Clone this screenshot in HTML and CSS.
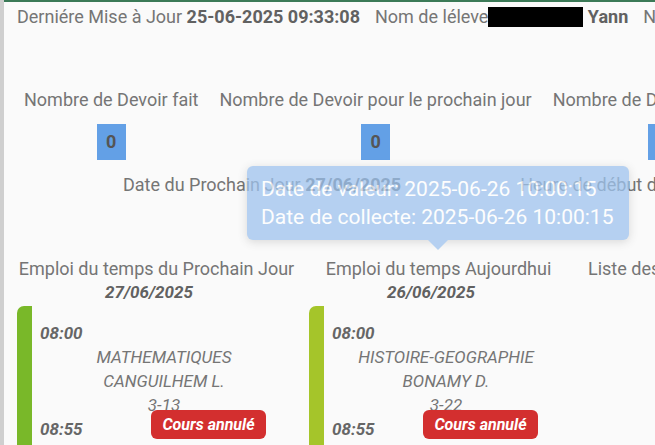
FILE: index.html
```html
<!DOCTYPE html>
<html lang="fr">
<head>
<meta charset="utf-8">
<title>Tableau de bord</title>
<link rel="stylesheet" href="styles.css">
</head>
<body>
<div class="frame">
  <div class="main">
    <div class="header">
      <span class="hitem">Derniére Mise à Jour <b>25-06-2025 09:33:08</b></span>
      <span class="hitem">Nom de léleve<span class="redact"></span> <b>Yann</b></span>
      <span class="hitem">Nom de la classe <b>3E</b></span>
    </div>

    <div class="stats">
      <div class="stat">
        <div class="stat-label">Nombre de Devoir fait</div>
        <div class="stat-value">0</div>
      </div>
      <div class="stat">
        <div class="stat-label">Nombre de Devoir pour le prochain jour</div>
        <div class="stat-value">0</div>
      </div>
      <div class="stat">
        <div class="stat-label">Nombre de Devoir en retard</div>
        <div class="stat-value">0</div>
      </div>
    </div>

    <div class="dayinfo">
      <span>Date du Prochain Jour <b>27/06/2025</b></span>
      <span>Heure de début du Prochain Jour <b>08:00</b></span>
    </div>

    <div class="columns">
      <div class="col col-next">
        <div class="col-title">Emploi du temps du Prochain Jour</div>
        <div class="col-date">27/06/2025</div>
        <div class="card">
          <div class="card-bar bar-green"></div>
          <div class="card-body">
            <div class="time">08:00</div>
            <div class="course">MATHEMATIQUES</div>
            <div class="course">CANGUILHEM L.</div>
            <div class="course">3-13</div>
            <div class="end-row">
              <span class="time">08:55</span>
              <span class="badge">Cours annulé</span>
            </div>
          </div>
        </div>
      </div>
      <div class="col col-today">
        <div class="col-title">Emploi du temps Aujourdhui</div>
        <div class="col-date">26/06/2025</div>
        <div class="card">
          <div class="card-bar bar-lime"></div>
          <div class="card-body">
            <div class="time">08:00</div>
            <div class="course">HISTOIRE-GEOGRAPHIE</div>
            <div class="course">BONAMY D.</div>
            <div class="course">3-22</div>
            <div class="end-row">
              <span class="time">08:55</span>
              <span class="badge">Cours annulé</span>
            </div>
          </div>
        </div>
      </div>
      <div class="col col-list">
        <div class="col-title">Liste des Devoirs</div>
      </div>
    </div>
  </div>
</div>

<div class="tooltip">
  <div>Date de valeur: 2025-06-26 10:00:15</div>
  <div>Date de collecte: 2025-06-26 10:00:15</div>
</div>
</body>
</html>
```

FILE: styles.css
```css
html, body {
  margin: 0;
  padding: 0;
  background: #fafafa;
  overflow: hidden;
  height: 100%;
}

body {
  font-family: Roboto, "Liberation Sans", sans-serif;
  font-size: 18px;
  color: #757575;
  white-space: nowrap;
}

b {
  font-weight: 700;
  color: #616161;
}

.frame {
  border-left: 4px solid #cfcfcf;
  min-height: 100%;
  box-sizing: border-box;
}

.main {
  border-top: 2px solid #3b7a57;
  padding-left: 13px;
  width: 1200px;
}

.header {
  padding-top: 3px;
  line-height: 24px;
  display: flex;
  gap: 15px;
}

.redact {
  display: inline-block;
  width: 95px;
  height: 20px;
  background: #000;
  vertical-align: -4px;
}

.stats {
  margin-top: 59px;
  padding-left: 7px;
  display: flex;
  gap: 21px;
}

.stat {
  display: flex;
  flex-direction: column;
  align-items: center;
}

.stat-label {
  line-height: 24px;
}

.stat-value {
  margin-top: 12px;
  background: #63a0e6;
  color: #555;
  font-weight: 700;
  width: 29px;
  height: 36px;
  line-height: 36px;
  text-align: center;
}

.dayinfo {
  margin-top: 13px;
  padding-left: 106px;
  line-height: 24px;
  display: flex;
  gap: 119px;
}

.columns {
  margin-top: 60px;
  display: flex;
}

.col-title {
  line-height: 24px;
  text-align: center;
}

.col-date {
  font-size: 17px;
  line-height: 22px;
  text-align: center;
  font-weight: 700;
  font-style: italic;
  color: #616161;
  padding-right: 15px;
}

.col-next {
  width: 279px;
}

.col-today {
  width: 259px;
  margin-left: 13px;
}

.col-list {
  margin-left: 20px;
}

.col-list .col-title {
  text-align: left;
}

.card {
  margin-top: 3px;
  display: flex;
  height: 200px;
}

.card-bar {
  width: 15px;
  flex: none;
  border-top-left-radius: 7px;
}

.bar-green {
  background: #79b829;
}

.bar-lime {
  background: #a5c52a;
}

.card-body {
  flex: 1;
  padding-top: 15px;
  font-style: italic;
  font-size: 17px;
}

.time {
  font-weight: 700;
  color: #666;
  line-height: 24px;
  padding-left: 8px;
}

.course {
  text-align: center;
  line-height: 24px;
}

.end-row {
  display: flex;
  justify-content: space-between;
  align-items: flex-start;
  padding-right: 30px;
}

.badge {
  margin-top: -7px;
  background: #d32f2f;
  color: #fff;
  font-size: 16px;
  font-weight: 700;
  font-style: italic;
  width: 115px;
  height: 29px;
  line-height: 29px;
  text-align: center;
  border-radius: 6px;
}

.tooltip {
  position: absolute;
  left: 247px;
  top: 166px;
  width: 382px;
  height: 74px;
  box-sizing: border-box;
  padding: 9px 14px 0;
  background: #9ec3ee;
  border-radius: 6px;
  color: #fff;
  font-size: 21px;
  line-height: 28px;
  opacity: 0.75;
  box-shadow: 0 2px 10px rgba(0, 0, 0, 0.18);
}

.tooltip::after {
  content: "";
  position: absolute;
  left: 181px;
  top: 74px;
  border-left: 10px solid transparent;
  border-right: 10px solid transparent;
  border-top: 10px solid #9ec3ee;
}
```
